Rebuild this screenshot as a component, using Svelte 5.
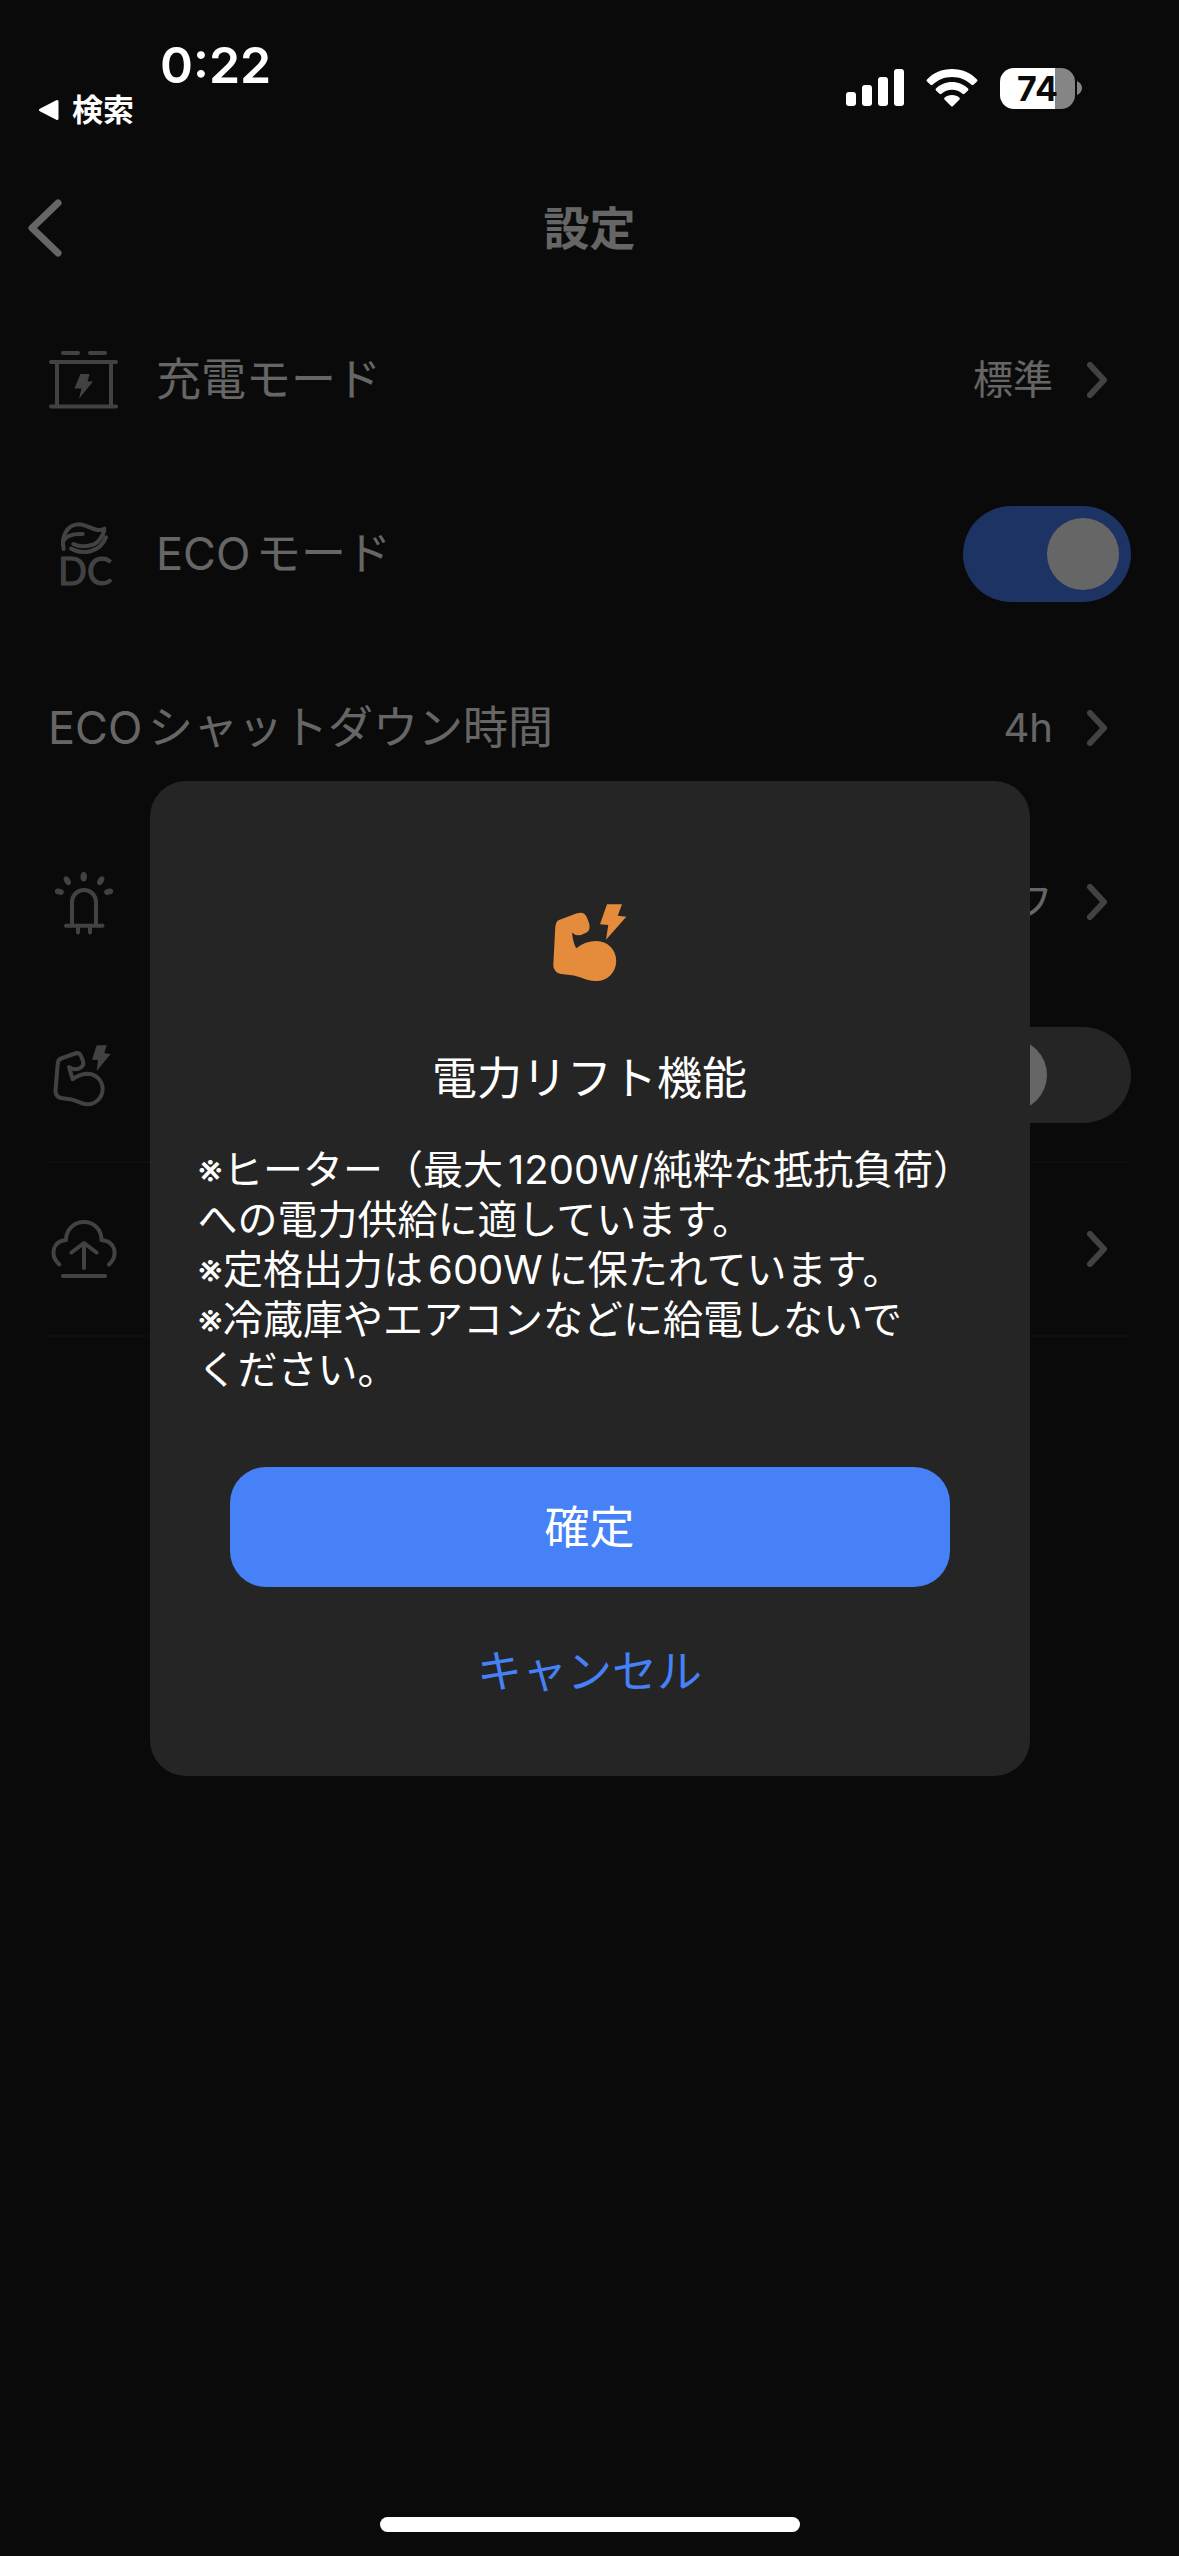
<script lang="ts">
	type Row = {
		icon?: 'charge' | 'eco' | 'light' | 'lift' | 'update';
		label?: string;
		aria?: string;
		value?: string;
		toggle?: boolean;
		divider?: boolean;
	};

	let ecoMode = $state(true);
	let powerLift = $state(false);
	let dialogOpen = $state(true);

	const rows: Row[] = [
		{ icon: 'charge', label: '充電モード', value: '標準' },
		{ icon: 'eco', label: 'ECOモード', toggle: true },
		{ label: 'ECOシャットダウン時間', value: '4h' },
		{ icon: 'light', aria: 'ライト', value: 'オフ' },
		{ icon: 'lift', aria: '電力リフト機能', toggle: true, divider: true },
		{ icon: 'update', aria: 'アップデート', divider: true }
	];

	const notes = [
		'※ヒーター（最大1200W/純粋な抵抗負荷）',
		'への電力供給に適しています。',
		'※定格出力は600Wに保たれています。',
		'※冷蔵庫やエアコンなどに給電しないで',
		'ください。'
	];

	function confirm() {
		powerLift = true;
		dialogOpen = false;
	}
</script>

{#snippet rowIcon(name)}
	<svg class="row-icon" viewBox="0 0 72 72" aria-hidden="true">
		{#if name === 'charge'}
			<path d="M15 9H30M42 9H57M3 18H68M3 62.5H68M9 18V62.5M63 18V62.5" />
			<path class="solid" d="M32.5 30H41.5L39.5 37.5H45L31 54.7L33.5 44.5H26.5Z" />
		{:else if name === 'eco'}
			<path d="M15.7 31C13 20 18 6.500 31 6.300C40 6.500 47 15 56.300 10.700C56 18 49 26 43.700 27C37 29 30 28.500 25.300 26" />
			<path d="M15.500 23C18 18 24 15.500 34.700 16" />
			<path d="M23 30.500C34 37 52 35 58 19.300" />
			<text x="10" y="67">DC</text>
		{:else if name === 'light'}
			<path d="M24 59V36A12 12 0 0 1 48 36V59M18 59.700H54.500M30 60V66.500M42 60V66.500" />
			<g class="solid">
				<ellipse cx="35.700" cy="10.700" rx="3.200" ry="4.800" />
				<ellipse cx="19.300" cy="14.700" rx="3" ry="4.800" transform="rotate(-30 19.300 14.700)" />
				<ellipse cx="52.700" cy="14.700" rx="3" ry="4.800" transform="rotate(30 52.700 14.700)" />
				<ellipse cx="11.300" cy="25.700" rx="3" ry="4.600" transform="rotate(-75 11.300 25.700)" />
				<ellipse cx="60.700" cy="25.700" rx="3" ry="4.600" transform="rotate(75 60.700 25.700)" />
			</g>
		{:else if name === 'lift'}
			<path d="M13 19.500L28.500 14Q31.500 13.500 33 17L35 22Q36.500 27 31.500 29.300Q25 31.500 21 28L24.700 40.300Q31 35 39.300 34.700A15.300 15.300 0 0 1 39.300 65.300C33 65.300 29 61 22 60.200L13 59Q7.500 57.500 7.500 52L9.700 25Q10 20.500 13 19.500Z" />
			<path class="solid" d="M48.700 6.300H58.700L56.300 14.300L62.700 15L48.700 32L50 21L44 20.700Z" />
		{:else}
			<path d="M11.300 51.500C1 42 5 28 18 27C18 16.500 26 9 36 9S53.500 16.500 53.500 27C67 28 71 42 61 51.500" />
			<path d="M36 55V30M23.500 39.500L36 30L48.500 39.500M15 63H57" />
		{/if}
	</svg>
{/snippet}

{#snippet rowBody(row)}
	{#if row.icon}
		{@render rowIcon(row.icon)}
	{/if}
	<span class="label">{row.label ?? ''}</span>
{/snippet}

<div class="screen">
	<div class="status">
		<div class="status-left">
			<span class="time">0:22</span>
			<a class="back-to-app" href="#search">
				<svg viewBox="0 0 22 22" aria-hidden="true">
					<path d="M19 2.500V19.500L2.500 11Z" />
				</svg>
				検索
			</a>
		</div>
		<div class="status-right">
			<svg class="signal" viewBox="0 0 58 38" aria-hidden="true">
				<rect x="0" y="23" width="10" height="14" rx="3" />
				<rect x="16" y="16" width="10" height="21" rx="3" />
				<rect x="32" y="8" width="10" height="29" rx="3" />
				<rect x="48" y="0" width="10" height="37" rx="3" />
			</svg>
			<svg class="wifi" viewBox="0 0 52 38" aria-hidden="true">
				<path d="M26 0C36 0 45 4 51 10.500Q52 11.500 51 12.500L47.500 15.800Q46.500 16.700 45.500 15.800C40 10.700 33.500 8 26 8S12 10.700 6.500 15.800Q5.500 16.700 4.500 15.800L1 12.500Q0 11.500 1 10.500C7 4 16 0 26 0Z" />
				<path d="M26 13C32 13 38 15.500 42 19.500Q43 20.500 42 21.500L38.500 24.800Q37.500 25.700 36.500 24.800C33.500 22.200 30 20.800 26 20.800S18.500 22.200 15.500 24.800Q14.500 25.700 13.500 24.800L10 21.500Q9 20.500 10 19.500C14 15.500 20 13 26 13Z" />
				<path d="M26 26C29 26 31.500 27 33.500 28.800Q34.300 29.700 33.500 30.600L27 37Q26 38 25 37L18.500 30.600Q17.700 29.700 18.500 28.800C20.500 27 23 26 26 26Z" />
			</svg>
			<div class="battery">
				<span class="level">74</span>
				<svg viewBox="0 0 5 14" aria-hidden="true"><path d="M0 0Q5 2.500 5 7T0 14Z" /></svg>
			</div>
		</div>
	</div>

	<header>
		<button class="nav-back" aria-label="戻る">
			<svg viewBox="0 0 34 58" aria-hidden="true"><path d="M30 4L4 29L30 54" /></svg>
		</button>
		<h1>設定</h1>
	</header>

	<main>
		{#each rows as row}
			{#if row.toggle}
				<label class="row" class:divider={row.divider}>
					{@render rowBody(row)}
					{#if row.icon === 'eco'}
						<input class="switch" type="checkbox" role="switch" bind:checked={ecoMode} />
					{:else}
						<input class="switch" type="checkbox" role="switch" aria-label={row.aria} bind:checked={powerLift} />
					{/if}
				</label>
			{:else}
				<button class="row link" class:divider={row.divider} aria-label={row.aria}>
					{@render rowBody(row)}
					{#if row.value}
						<span class="value">{row.value}</span>
					{/if}
					<svg class="chevron" viewBox="0 0 20 36" aria-hidden="true"><path d="M3 3L17 18L3 33" /></svg>
				</button>
			{/if}
		{/each}
	</main>

	<div class="home-indicator"></div>

	{#if dialogOpen}
		<div class="overlay">
			<div class="dialog" role="dialog" aria-modal="true" aria-labelledby="dialog-title">
				<svg class="dialog-icon" viewBox="0 0 80 80" aria-hidden="true">
					<path d="M9 17L27 10.300Q34 8 36.700 14L39 20Q41 27 36.500 29.500Q27 35 22.300 29.500L22.300 32Q23.500 41 26.300 45.300Q35 38 46.700 38A19.500 20 0 0 1 46.700 78C37 78.500 31 73.500 22 72.300L11 71Q3.500 69.500 3.300 62L5.300 24Q6 18 9 17Z" />
					<path d="M57 1.300H72L67.700 12.700L76.300 13.700L56 36.700L58.300 22L50 21.300Z" />
				</svg>
				<h2 id="dialog-title">電力リフト機能</h2>
				<p>{notes.join('\n')}</p>
				<button class="btn btn-primary" onclick={confirm}>確定</button>
				<button class="btn btn-ghost" onclick={() => (dialogOpen = false)}>キャンセル</button>
			</div>
		</div>
	{/if}
</div>

<style>
	:global(body) {
		background: #191919;
	}

	.screen {
		position: relative;
		display: flex;
		flex-direction: column;
		min-height: 100vh;
		background: #191919;
		color: #fff;
		font-family: Inter, 'Noto Sans CJK JP', sans-serif;
		text-autospace: normal;
	}

	button {
		border: 0;
		padding: 0;
		background: none;
		color: inherit;
		font: inherit;
		cursor: pointer;
	}

	svg {
		display: block;
		flex: none;
	}

	/* Status bar stays bright above the overlay */
	.status {
		position: relative;
		z-index: 2;
		display: flex;
		justify-content: space-between;
		box-sizing: border-box;
		height: 162px;
		padding: 35px 97px 0 38px;
	}

	.time {
		display: block;
		padding-left: 122px;
		font-size: 50px;
		line-height: 60px;
		font-weight: 600;
	}

	.back-to-app {
		display: flex;
		align-items: center;
		gap: 12px;
		color: inherit;
		font-size: 31px;
		line-height: 30px;
		font-weight: 700;
		text-decoration: none;
	}

	.back-to-app svg {
		width: 22px;
		height: 22px;
		fill: #fff;
		stroke: #fff;
		stroke-width: 3;
		stroke-linejoin: round;
	}

	.status-right {
		display: flex;
		align-items: center;
		gap: 22px;
		height: 106px;
		fill: #fff;
	}

	.signal {
		width: 58px;
		height: 38px;
	}

	.wifi {
		width: 52px;
		height: 38px;
	}

	.battery {
		display: flex;
		align-items: center;
		gap: 2px;
		fill: #858585;
	}

	.battery svg {
		width: 5px;
		height: 14px;
	}

	.level {
		width: 75px;
		border-radius: 14px;
		background: linear-gradient(90deg, #fff 74%, #858585 74%);
		color: #0a0a0a;
		font-size: 34px;
		line-height: 41px;
		font-weight: 700;
		text-align: center;
	}

	header {
		display: grid;
		grid-template-columns: 1fr auto 1fr;
		align-items: center;
		height: 131px;
		padding: 0 28px;
	}

	.nav-back {
		justify-self: start;
	}

	.nav-back svg {
		width: 34px;
		height: 58px;
		fill: none;
		stroke: #fff;
		stroke-width: 7;
		stroke-linecap: round;
		stroke-linejoin: round;
	}

	h1 {
		margin: 0;
		font-size: 46px;
		line-height: 60px;
		font-weight: 700;
	}

	main {
		padding: 0 48px;
	}

	.row {
		display: flex;
		align-items: center;
		box-sizing: border-box;
		width: 100%;
		height: 174px;
		font-size: 45px;
		line-height: 60px;
		text-align: left;
	}

	.link {
		padding-right: 24px;
	}

	.divider {
		border-bottom: 2px solid #242424;
	}

	.row-icon {
		width: 72px;
		height: 72px;
		margin-right: 36px;
		overflow: visible;
		fill: none;
		stroke: #a6a6a6;
		stroke-width: 4;
		stroke-linecap: round;
		stroke-linejoin: round;
	}

	.row-icon .solid {
		fill: #a6a6a6;
		stroke: none;
	}

	.row-icon text {
		fill: #a6a6a6;
		stroke-width: 1;
		font-family: Lato, sans-serif;
		font-size: 38px;
		line-height: 40px;
	}

	.label {
		flex: 1;
	}

	.value {
		font-size: 40px;
	}

	.chevron {
		width: 20px;
		height: 36px;
		margin-left: 34px;
		fill: none;
		stroke: #a6a6a6;
		stroke-width: 6;
		stroke-linecap: round;
		stroke-linejoin: round;
	}

	.switch {
		appearance: none;
		display: flex;
		box-sizing: border-box;
		width: 168px;
		height: 96px;
		margin: 0;
		padding: 12px;
		border-radius: 48px;
		background: #5c5c5c;
		cursor: pointer;
	}

	.switch::before {
		content: '';
		width: 72px;
		height: 72px;
		border-radius: 50%;
		background: #fff;
	}

	.switch:checked {
		justify-content: flex-end;
		background: #4681f8;
	}

	.home-indicator {
		position: relative;
		z-index: 2;
		width: 420px;
		height: 15px;
		margin: auto auto 24px;
		border-radius: 8px;
		background: #fff;
	}

	.overlay {
		position: absolute;
		inset: 0;
		z-index: 1;
		display: flex;
		align-items: center;
		justify-content: center;
		background: rgba(0, 0, 0, 0.6);
	}

	.dialog {
		display: flex;
		flex-direction: column;
		align-items: center;
		box-sizing: border-box;
		width: 880px;
		max-width: 90%;
		padding: 122px 48px 45px;
		border-radius: 36px;
		background: #252525;
	}

	.dialog-icon {
		width: 80px;
		height: 80px;
		fill: #e58c3c;
	}

	h2 {
		margin: 66px 0 36px;
		font-size: 45px;
		line-height: 60px;
		font-weight: 400;
	}

	p {
		align-self: stretch;
		margin: 0 0 72px;
		font-size: 40px;
		line-height: 50px;
		white-space: pre-line;
	}

	.btn {
		width: 720px;
		max-width: 100%;
		height: 120px;
		padding-bottom: 4px;
		border-radius: 36px;
		font-size: 45px;
	}

	.btn-primary {
		background: #4681f8;
	}

	.btn-ghost {
		margin-top: 24px;
		color: #4681f8;
	}
</style>
